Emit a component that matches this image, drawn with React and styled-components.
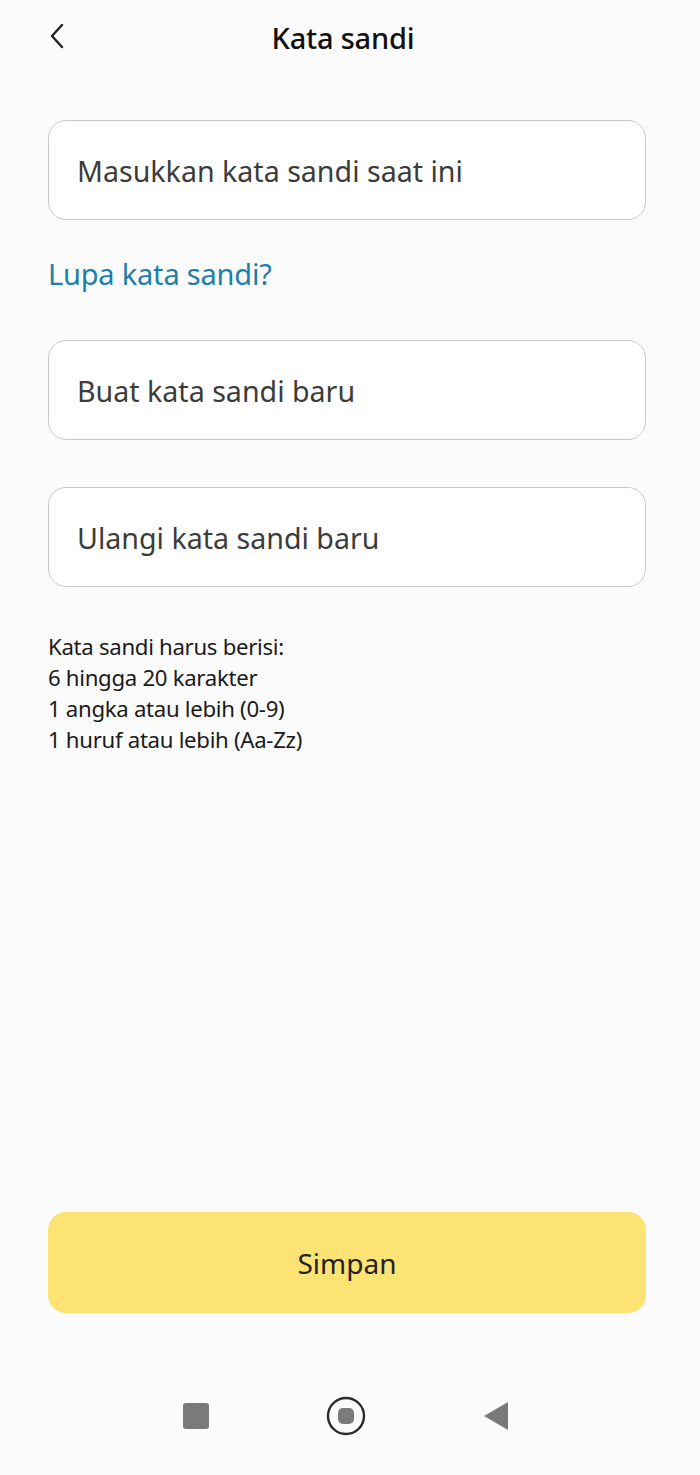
import React from 'react';
import styled, { createGlobalStyle } from 'styled-components';

const GlobalStyle = createGlobalStyle`
    * { box-sizing: border-box; }
    body {
        margin: 0;
        background: #fbfbfb;
        font-family: "Noto Sans", "Open Sans", sans-serif;
        color: #1c1c1c;
    }
`;

function Field({ placeholder }) {
    return (
        <FieldBox>
            <FieldInput type="password" placeholder={placeholder} />
        </FieldBox>
    );
}

function App() {
    return (
        <>
            <GlobalStyle />
            <Screen>
                <Header>
                    <BackButton aria-label="Kembali">
                        <svg width="18" height="26" viewBox="0 0 18 26" fill="none">
                            <path d="M14 2 L4 13 L14 24" stroke="#222" strokeWidth="2.4" strokeLinecap="round" strokeLinejoin="round" />
                        </svg>
                    </BackButton>
                    <Title>Kata sandi</Title>
                </Header>

                <Form>
                    <Field placeholder="Masukkan kata sandi saat ini" />
                    <ForgotLink href="#">Lupa kata sandi?</ForgotLink>
                    <FieldGroup>
                        <Field placeholder="Buat kata sandi baru" />
                        <Field placeholder="Ulangi kata sandi baru" />
                    </FieldGroup>
                    <Rules>
                        <li>Kata sandi harus berisi:</li>
                        <li>6 hingga 20 karakter</li>
                        <li>1 angka atau lebih (0-9)</li>
                        <li>1 huruf atau lebih (Aa-Zz)</li>
                    </Rules>
                </Form>

                <Footer>
                    <SaveButton>Simpan</SaveButton>
                </Footer>

                <NavBar>
                    <NavIcon>
                        <svg width="28" height="28" viewBox="0 0 28 28">
                            <rect x="1" y="1" width="26" height="26" rx="3" fill="#7a7a7a" />
                        </svg>
                    </NavIcon>
                    <NavIcon>
                        <svg width="40" height="40" viewBox="0 0 40 40">
                            <circle cx="20" cy="20" r="18" fill="none" stroke="#2a2a2a" strokeWidth="2.4" />
                            <rect x="12" y="12" width="16" height="16" rx="5" fill="#7a7a7a" />
                        </svg>
                    </NavIcon>
                    <NavIcon>
                        <svg width="30" height="32" viewBox="0 0 30 32">
                            <path d="M27 2 L27 30 L3 16 Z" fill="#7a7a7a" strokeLinejoin="round" />
                        </svg>
                    </NavIcon>
                </NavBar>
            </Screen>
        </>
    );
}

export default App;

const Screen = styled.div`
    width: 700px;
    height: 1475px;
    display: flex;
    flex-direction: column;
    background: #fbfbfb;
`;
const Header = styled.header`
    position: relative;
    height: 74px;
    display: flex;
    align-items: center;
    justify-content: center;
    padding-right: 14px;
`;
const BackButton = styled.button`
    position: absolute;
    left: 48px;
    top: 23px;
    border: none;
    background: none;
    padding: 0;
    display: flex;
    cursor: pointer;
`;
const Title = styled.h1`
    margin: 0;
    font-size: 29px;
    font-weight: 500;
    letter-spacing: -0.2px;
    color: #111;
`;
const Form = styled.main`
    flex: 1;
    padding: 46px 54px 0 48px;
    display: flex;
    flex-direction: column;
`;
const FieldBox = styled.div`
    height: 100px;
    border: 1.5px solid #c9c9c9;
    border-radius: 18px;
    background: #fff;
    display: flex;
    align-items: center;
    padding: 0 26px;
`;
const FieldInput = styled.input`
    width: 100%;
    border: none;
    outline: none;
    background: transparent;
    font-family: inherit;
    font-size: 28.6px;
    color: #222;
    &::placeholder {
        color: #3b3b3b;
    }
`;
const ForgotLink = styled.a`
    margin: 38px 0 50px;
    font-size: 29px;
    color: #1c7fab;
    text-decoration: none;
    line-height: 32px;
    letter-spacing: -0.2px;
`;
const FieldGroup = styled.div`
    display: flex;
    flex-direction: column;
    gap: 47px;
`;
const Rules = styled.ul`
    list-style: none;
    margin: 44px 0 0;
    padding: 0;
    font-size: 22.2px;
    line-height: 31px;
    color: #1a1a1a;
    letter-spacing: -0.3px;
`;
const Footer = styled.div`
    padding: 0 54px 0 48px;
`;
const SaveButton = styled.button`
    width: 100%;
    height: 101px;
    border: none;
    border-radius: 18px;
    background: #fde274;
    font-family: inherit;
    font-size: 28px;
    color: #222;
    cursor: pointer;
`;
const NavBar = styled.nav`
    height: 162px;
    display: flex;
    justify-content: center;
    align-items: center;
    gap: 100px;
    padding: 44px 8px 0 0;
`;
const NavIcon = styled.div`
    width: 50px;
    display: flex;
    justify-content: center;
`;
